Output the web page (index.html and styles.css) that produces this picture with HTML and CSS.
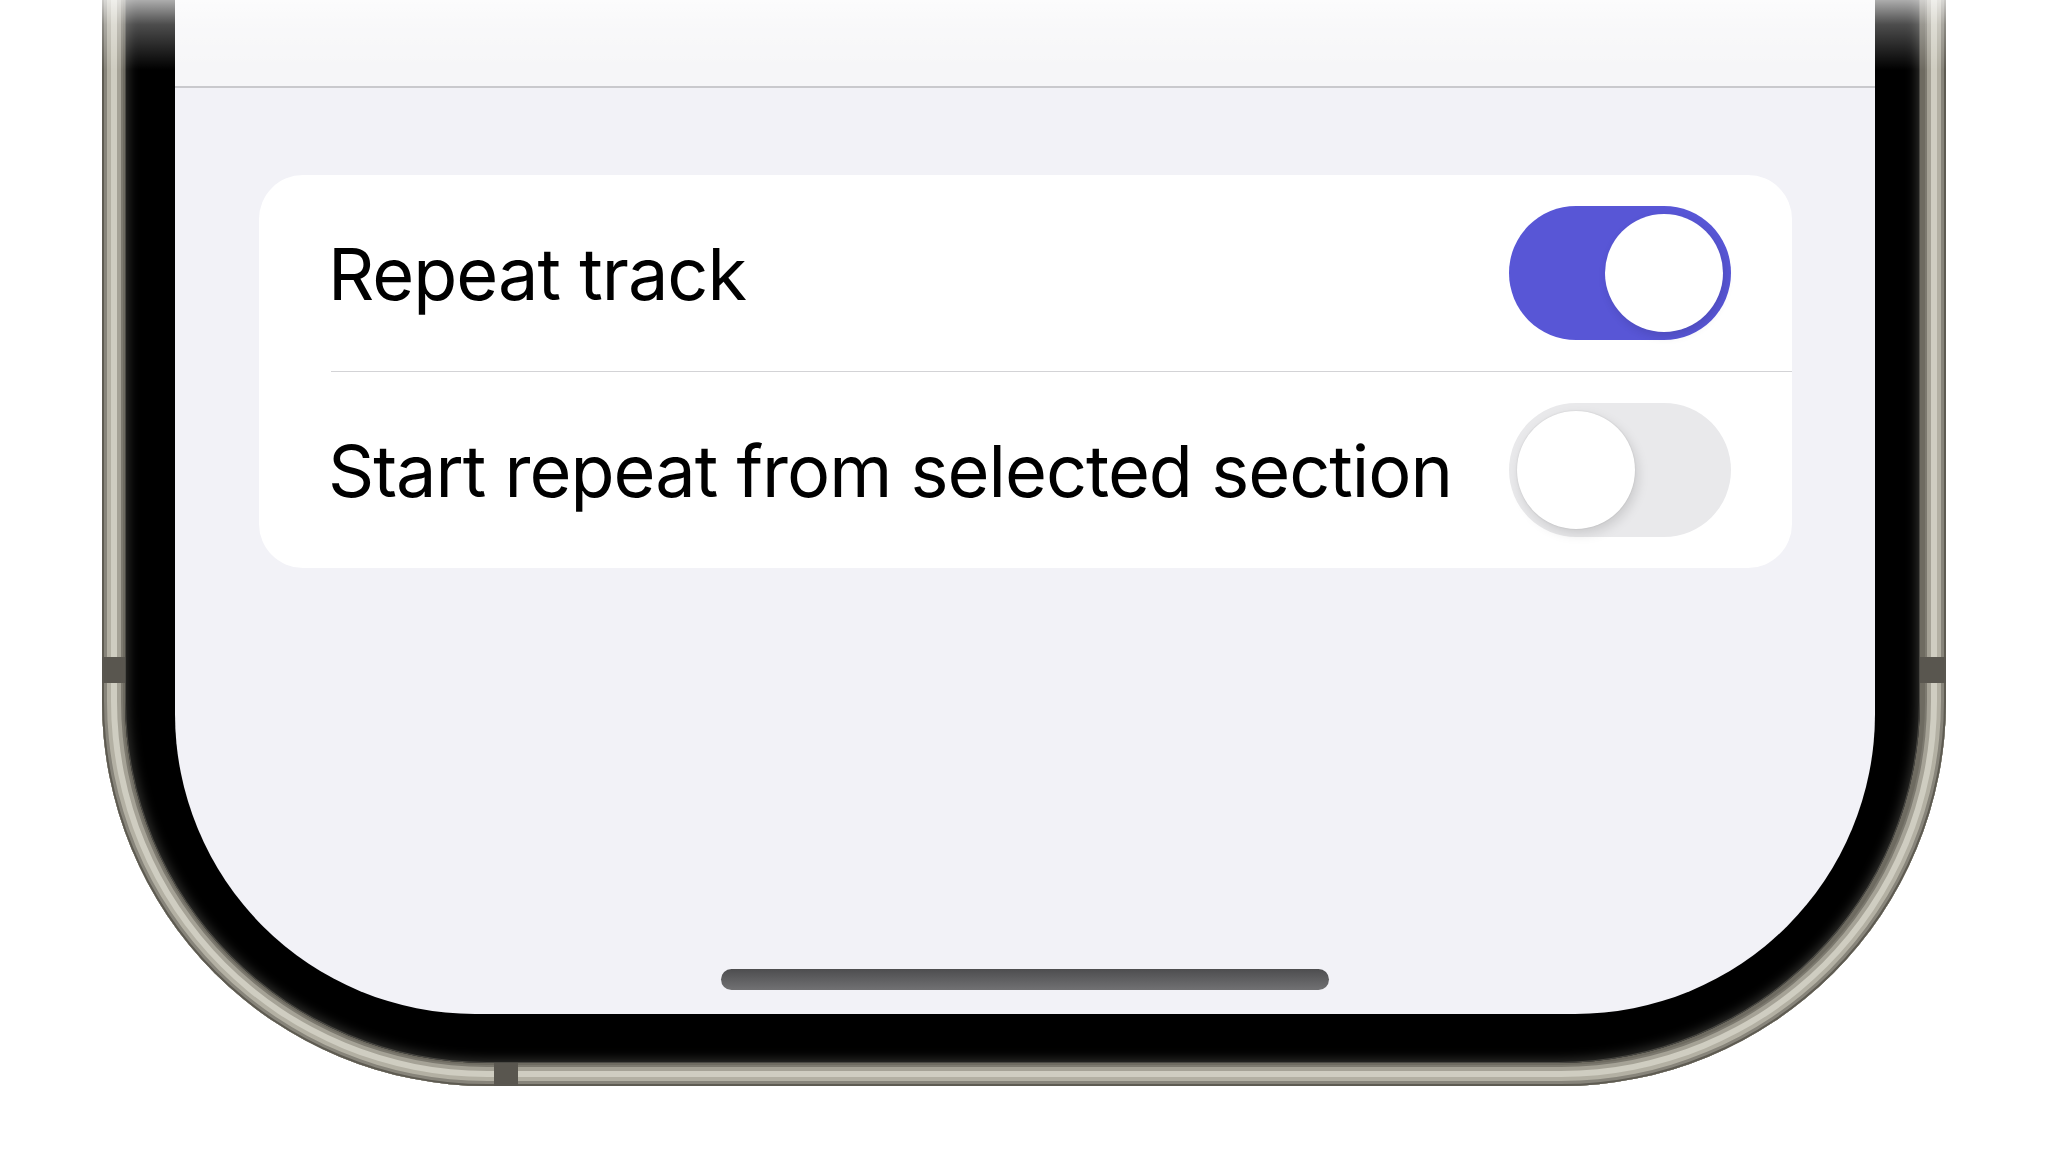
FILE: index.html
```html
<!DOCTYPE html>
<html lang="en">
<head>
    <meta charset="UTF-8">
    <meta name="viewport" content="width=device-width, initial-scale=1.0">
    <title>Repeat settings</title>
    <link rel="stylesheet" href="styles.css">
</head>
<body>

    <div class="phone">
        <!-- side buttons on the titanium band -->
        <span class="notch notch-left"></span>
        <span class="notch notch-right"></span>
        <span class="notch notch-bottom"></span>

        <div class="bezel">
            <div class="screen">
                <div class="navbar"></div>

                <div class="group">
                    <div class="row">
                        <span class="label">Repeat track</span>
                        <span class="switch on" role="switch" aria-checked="true"><span class="knob"></span></span>
                    </div>
                    <div class="divider"></div>
                    <div class="row">
                        <span class="label">Start repeat from selected section</span>
                        <span class="switch" role="switch" aria-checked="false"><span class="knob"></span></span>
                    </div>
                </div>

                <div class="spacer"></div>
                <div class="home-bar"></div>
            </div>
        </div>
    </div>

    <div class="top-fade"></div>

</body>
</html>
```

FILE: styles.css
```css
body {
    margin: 0;
    background: #ffffff;
    font-family: Inter, "Noto Sans", sans-serif;
    overflow: hidden;
}

/* phone frame, its top runs off the page */
.phone {
    position: relative;
    width: 1844px;
    height: 1486px;
    box-sizing: border-box;
    margin: -400px 0 0 102px;
    padding: 0 26px 23px 23px;
    border-radius: 0 0 385px 385px;
    background: #6e6b61;
    box-shadow:
        inset 0 0 0 2px #5e5b52,
        inset 0 0 0 5px #87847a,
        inset 0 0 0 9px #b3b0a3,
        inset 0 0 0 15px #cfcdc1,
        inset 0 0 0 19px #a5a296,
        inset 0 0 0 21px #7c796f;
}
.notch {
    position: absolute;
    background: #59564f;
}
.notch-left {
    left: 0;
    top: 1057px;
    width: 23px;
    height: 26px;
}
.notch-right {
    right: 0;
    top: 1057px;
    width: 26px;
    height: 26px;
}
.notch-bottom {
    left: 392px;
    bottom: 0;
    width: 24px;
    height: 23px;
}

.bezel {
    height: 100%;
    box-sizing: border-box;
    padding: 400px 45px 49px 50px;
    background: #000000;
    border-radius: 0 0 362px 362px;
    box-shadow: inset 0 0 0 1px #4a4944, inset 0 0 12px 3px rgba(95, 95, 90, 0.55);
}

.screen {
    height: 100%;
    display: flex;
    flex-direction: column;
    background: #f2f2f7;
    border-radius: 0 0 300px 300px;
    overflow: hidden;
}

.navbar {
    height: 86px;
    flex-shrink: 0;
    background: #f6f6f8;
    border-bottom: 2px solid #c9c9cd;
}

.group {
    margin: 87px 83px 0 84px;
    background: #ffffff;
    border-radius: 44px;
}
.row {
    height: 196px;
    display: flex;
    align-items: center;
    justify-content: space-between;
    padding: 0 61px 0 69px;
}
.label {
    font-size: 72px;
    letter-spacing: -1px;
    color: #000000;
}
.divider {
    height: 1px;
    margin-left: 72px;
    background: #d3d3d6;
}

.switch {
    width: 222px;
    height: 134px;
    flex-shrink: 0;
    box-sizing: border-box;
    padding: 8px;
    display: flex;
    border-radius: 67px;
    background: #e9e9eb;
}
.switch.on {
    justify-content: flex-end;
    background: #5856d6;
}
.knob {
    width: 118px;
    height: 118px;
    border-radius: 50%;
    background: #ffffff;
    box-shadow: 3px 5px 12px rgba(0, 0, 0, 0.13), 0 0 2px rgba(0, 0, 0, 0.12);
}
.switch.on .knob {
    box-shadow: 2px 4px 10px rgba(0, 0, 0, 0.12);
}

.spacer {
    flex: 1;
}
.home-bar {
    width: 608px;
    height: 21px;
    margin: 0 auto 24px;
    border-radius: 11px;
    background: linear-gradient(#4d4d4f, #717173);
}

/* light fade across the top edge */
.top-fade {
    position: absolute;
    left: 0;
    top: 0;
    width: 100%;
    height: 70px;
    background: linear-gradient(rgba(255, 255, 255, 0.68), rgba(255, 255, 255, 0.3) 35%, rgba(255, 255, 255, 0));
    pointer-events: none;
}
```
